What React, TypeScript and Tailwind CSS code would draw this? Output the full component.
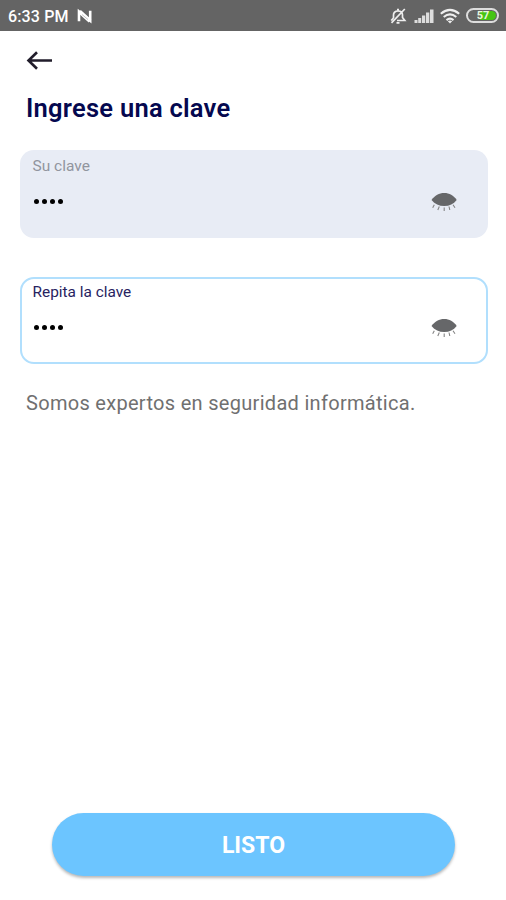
import React from "react";

function ClosedEye() {
  return (
    <svg className="block h-6 w-7" viewBox="0 0 28 24" fill="none">
      <path d="M1.500 10C5 5.300 9 3 14.200 3S23.500 5.300 26.700 10C23.500 14 19.500 16 14.200 16S5 14 1.500 10Z" fill="#666769" />
      <path d="M4.300 14.700L2.700 17.800M9.300 16.500L7.800 20M14.200 17.500V21M19 16.500L19.800 20M23 14.700L25 17.800" stroke="#858585" strokeWidth="1.100" />
    </svg>
  );
}

function StatusBar() {
  return (
    <header className="flex h-[31px] items-center bg-[#646464] pr-[7px] pl-2 text-white">
      <span className="w-[61px] pt-0.5 text-[16px] leading-[29px] font-medium tracking-[0.150px] whitespace-nowrap">6:33 PM</span>
      <svg className="ml-2 h-4 w-4" viewBox="0 0 16 16" fill="none" stroke="#fff">
        <path d="M2 13.200V3.600L13.200 12.800V2.800" strokeWidth="2.600" />
        <path d="M2.500 3.600L13 13" strokeWidth="4" />
        <path d="M5 6.500L11 11.500" stroke="#999" strokeWidth=".6" />
      </svg>
      <div className="ml-auto flex items-center">
        <svg className="h-[18px] w-[18px]" viewBox="0 0 18 18" fill="none" stroke="#eee" strokeWidth="1.700">
          <path d="M4.500 11V8C4.500 5.500 6.500 4 9 4C11.500 4 13.500 5.500 13.500 8V10.500L15.800 13.500H8M2.200 13.500L4.500 11M7.500 15.800H10.500M8 2.500H10M15.800 2L2.500 15.800" />
        </svg>
        <svg className="ml-[7px] h-[18px] w-5" viewBox="0 0 20 18" fill="#ddd">
          <path d="M.5 13h3v3h-3zM4.200 11h3v5h-3zM8 8.500h3.200V16H8zM12 5.500h3.300V16H12zM16 2.500h3.500V16H16z" />
        </svg>
        <svg className="ml-[5px] h-[18px] w-[22px]" viewBox="0 0 22 18" fill="none" stroke="#eee" strokeWidth="2.100">
          <path d="M1.800 6.700Q11-1.100 20.200 6.700M4.700 10Q11 4.800 17.300 10M7.500 13.100Q11 10.200 14.500 13.100" />
          <path d="M8.800 14.200Q11 12.700 13.200 14.200L11 16.500Z" fill="#eee" stroke="none" />
        </svg>
        <div className="ml-[5px] flex h-[15px] w-[33px] rounded-full border-2 border-[#ddd] p-px">
          <div className="flex h-full w-full items-center justify-center rounded-full bg-[linear-gradient(to_right,#646464_42%,#45c514_42%)] pl-px text-[11px] leading-none font-bold text-[#e8f5df]">57</div>
        </div>
      </div>
    </header>
  );
}

function PasswordField({ label, active = false }: { label: string; active?: boolean }) {
  return (
    <div className={active
      ? "h-[87px] rounded-[14px] border-2 border-[#b1dffd] bg-white pt-[3px] pr-7 pl-[10.500px] text-[#28235f]"
      : "h-[88px] rounded-[14px] bg-[#e8ecf5] pt-1.5 pr-[30px] pl-[12.500px] text-[#91959e]"}>
      <div className={active ? "h-5 w-max text-[15.400px] leading-5" : "h-5 w-max text-[15.500px] leading-5"}>{label}</div>
      <div className="mt-[10px] flex h-[31px] items-center justify-between">
        <div className="flex gap-[3px] pl-px">
          {[0, 1, 2, 3].map((dot) => <i key={dot} className="block h-[5px] w-[5px] rounded-full bg-black" />)}
        </div>
        <ClosedEye />
      </div>
    </div>
  );
}

export default function App() {
  return (
    <main className="flex h-[900px] w-[506px] flex-col overflow-hidden bg-white font-['Roboto',sans-serif]">
      <StatusBar />
      <div className="flex flex-1 flex-col pt-[19px]">
        <svg className="ml-[26px] h-[22px] w-[27px]" viewBox="0 0 27 22" fill="none" stroke="#211d2b" strokeWidth="2.600">
          <path d="M26 10.500H2.500M11 2.200L2.500 10.500L11 18.800" />
        </svg>
        <h1 className="mt-5 ml-[26px] h-8 w-max text-[25.500px] leading-8 font-semibold tracking-[0.250px] text-[#05084f]">Ingrese una clave</h1>
        <section className="mt-[26px] flex flex-col gap-[39px] pr-[18.500px] pl-5">
          <PasswordField label="Su clave" />
          <PasswordField label="Repita la clave" active />
        </section>
        <p className="mt-[25px] ml-[26px] w-max text-[20px] leading-7 tracking-[0.300px] text-[#707070]">Somos expertos en seguridad informática.</p>
        <button className="mt-auto mb-6 ml-[52px] h-[63px] w-[403px] rounded-full bg-[#6cc5ff] pt-[3px] text-[23px] font-bold text-white shadow-[0_2px_3px_rgba(0,0,0,0.280)]">LISTO</button>
      </div>
    </main>
  );
}
